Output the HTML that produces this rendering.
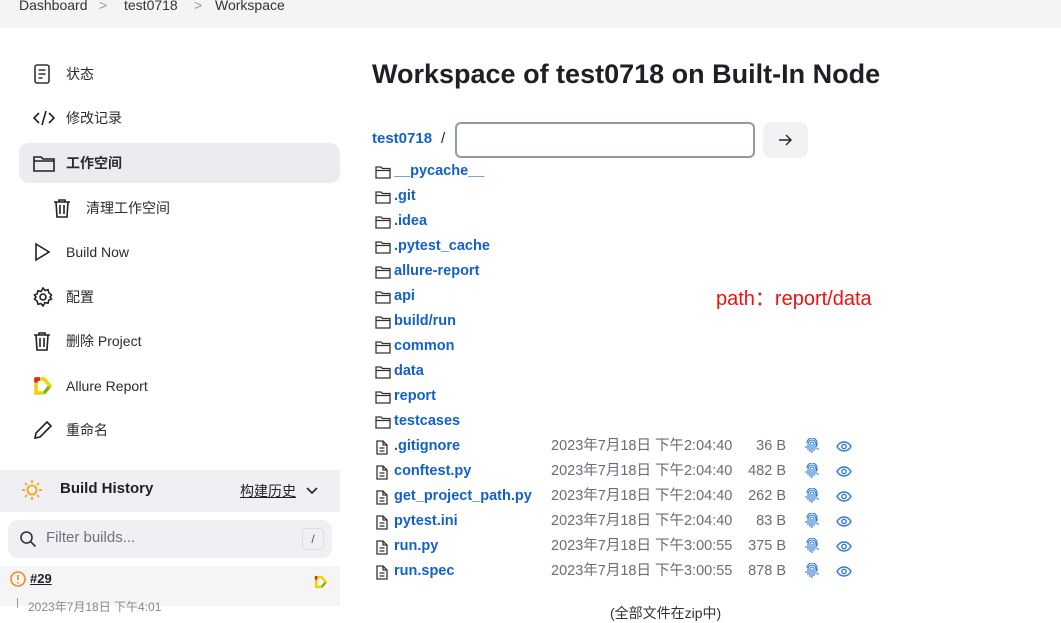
<!DOCTYPE html>
<html><head><meta charset="utf-8"><style>
*{margin:0;padding:0;box-sizing:border-box}
body{width:1061px;height:606px;overflow:hidden;background:#fff;font-family:"Liberation Sans","Noto Sans CJK SC",sans-serif;color:#1f1f26;position:relative}
.abs{position:absolute}
.bc{left:0;top:0;width:1061px;height:28px;background:#f4f4f6;font-size:14px;color:#333}
.bc span{position:absolute;top:-3px}
.side{font-size:14px;color:#2b2b33}
.item{position:absolute;left:19px;width:321px;height:40px;line-height:40px;padding-left:47px}
.item svg{position:absolute;left:14px;top:10px}
.sel{background:#ebebf0;border-radius:10px;font-weight:bold}
a{color:#1361c8;font-weight:bold;text-decoration:none}
.row{position:absolute;left:375px;height:25px;line-height:25px;font-size:14.5px;width:500px}
.row .ic{position:absolute;left:0;top:6px}
.row a{position:absolute;left:19px}
.dt{position:absolute;left:176px;color:#6b6b7a}
.sz{position:absolute;right:89px;color:#6b6b7a}
.row .fp{position:absolute;left:430px;top:4px}
.row .ey{position:absolute;left:461px;top:7px}
</style></head><body>
<div class="abs bc"><span style="left:19px">Dashboard</span><span style="left:99px;color:#999">&gt;</span><span style="left:124px">test0718</span><span style="left:194px;color:#999">&gt;</span><span style="left:215px">Workspace</span></div>

<div class="side">
<div class="item" style="top:54px"><svg width="18" height="20" viewBox="0 0 18 20" fill="none" stroke="#333" stroke-width="1.6"><rect x="2" y="1" width="14" height="18" rx="2"/><path d="M5.5 6h7M5.5 10h7M5.5 14h4"/></svg>状态</div>
<div class="item" style="top:98px"><svg width="22" height="20" viewBox="0 0 22 20" fill="none" stroke="#222" stroke-width="1.6"><path d="M6 5l-5 5 5 5M16 5l5 5-5 5M13 3l-4 14"/></svg>修改记录</div>
<div class="item sel" style="top:143px"><svg width="22" height="20" viewBox="0 0 22 20" fill="none" stroke="#222" stroke-width="1.6"><path d="M1 4h7l2 2h11v12H1z M1 8h20"/></svg>工作空间</div>
<div class="item" style="top:188px;padding-left:67px"><svg style="left:34px" width="18" height="20" viewBox="0 0 18 20" fill="none" stroke="#222" stroke-width="1.6"><path d="M1 4h16M6 4V2h6v2M3 4l1 15h10l1-15M7 7v9M11 7v9"/></svg>清理工作空间</div>
<div class="item" style="top:232px"><svg width="18" height="20" viewBox="0 0 18 20" fill="none" stroke="#222" stroke-width="1.6"><path d="M3 2l13 8-13 8z"/></svg>Build Now</div>
<div class="item" style="top:277px"><svg width="20" height="20" viewBox="0 0 20 20" fill="none" stroke="#222" stroke-width="1.6"><circle cx="10" cy="10" r="3"/><path d="M10 1l2 2.5 3-.8.8 3L18.5 8 17 10l1.5 2-2.7 1.3-.8 3-3-.8L10 19l-2-2.5-3 .8-.8-3L1.5 12 3 10 1.5 8l2.7-1.3.8-3 3 .8z"/></svg>配置</div>
<div class="item" style="top:321px"><svg width="18" height="20" viewBox="0 0 18 20" fill="none" stroke="#222" stroke-width="1.6"><path d="M1 4h16M6 4V2h6v2M3 4l1 15h10l1-15M7 7v9M11 7v9"/></svg>删除 Project</div>
<div class="item" style="top:366px"><svg width="20" height="20" viewBox="0 0 20 20" fill="none"><path d="M3 3h8l6 7-6 7H3z" stroke="#f5d000" stroke-width="3.5"/><path d="M3 3h4" stroke="#e0201b" stroke-width="3.5"/><path d="M3 1.5v5" stroke="#e0201b" stroke-width="3.5"/><path d="M11 17l5-6" stroke="#5fb830" stroke-width="3"/></svg>Allure Report</div>
<div class="item" style="top:410px"><svg width="20" height="20" viewBox="0 0 20 20" fill="none" stroke="#222" stroke-width="1.6"><path d="M14 2l4 4L7 17l-5 1 1-5z"/></svg>重命名</div>
</div>

<div class="abs" style="left:0;top:470px;width:340px;height:42px;background:#f0f0f4"></div>
<svg class="abs" style="left:21px;top:479px" width="22" height="22" viewBox="0 0 22 22" fill="none" stroke="#f5a623" stroke-width="1.8"><circle cx="11" cy="11" r="4.5"/><path d="M11 1v3M11 18v3M1 11h3M18 11h3M4 4l2 2M16 16l2 2M4 18l2-2M16 6l2-2"/></svg>
<div class="abs" style="left:60px;top:480px;font-size:15px;font-weight:bold">Build History</div>
<div class="abs" style="left:240px;top:481px;font-size:14px;text-decoration:underline">构建历史</div>
<svg class="abs" style="left:305px;top:486px" width="14" height="10" viewBox="0 0 14 10" fill="none" stroke="#222" stroke-width="1.6"><path d="M2 2l5 5 5-5"/></svg>
<div class="abs" style="left:8px;top:520px;width:324px;height:38px;background:#f0f0f4;border-radius:10px"></div>
<svg class="abs" style="left:19px;top:530px" width="18" height="18" viewBox="0 0 18 18" fill="none" stroke="#333" stroke-width="1.6"><circle cx="7.5" cy="7.5" r="5.5"/><path d="M11.5 11.5l5 5"/></svg>
<div class="abs" style="left:46px;top:529px;font-size:15px;color:#6e6e7e">Filter builds...</div>
<div class="abs" style="left:302px;top:528px;width:22px;height:22px;border:1px solid #ddd;border-radius:4px;font-size:12px;text-align:center;line-height:20px;color:#555">/</div>
<div class="abs" style="left:0;top:566px;width:340px;height:40px;background:#f5f5f7"></div>
<svg class="abs" style="left:10px;top:571px" width="16" height="16" viewBox="0 0 16 16" fill="none" stroke="#f08c1a" stroke-width="1.6"><circle cx="8" cy="8" r="7"/><path d="M8 4v5M8 11v1.5"/></svg>
<div class="abs" style="left:30px;top:571px;font-size:13px;font-weight:bold;text-decoration:underline">#29</div>
<svg class="abs" style="left:314px;top:575px" width="14" height="14" viewBox="0 0 20 20" fill="none"><path d="M3 3h8l6 7-6 7H3z" stroke="#f5d000" stroke-width="3.5"/><path d="M3 1.5v5" stroke="#e0201b" stroke-width="3.5"/><path d="M11 17l5-6" stroke="#5fb830" stroke-width="3"/></svg>
<div class="abs" style="left:17px;top:598px;width:1px;height:10px;background:#999"></div>
<div class="abs" style="left:28px;top:598px;font-size:12px;color:#888">2023年7月18日 下午4:01</div>

<div class="abs" style="left:372px;top:59px;font-size:27px;font-weight:bold;color:#1f1f26">Workspace of test0718 on Built-In Node</div>
<div class="abs" style="left:372px;top:130px;font-size:15px"><a>test0718</a></div>
<div class="abs" style="left:441px;top:130px;font-size:15px">/</div>
<div class="abs" style="left:455px;top:122px;width:300px;height:36px;border:2px solid #8e9ba6;border-radius:6px"></div>
<div class="abs" style="left:763px;top:122px;width:45px;height:36px;background:#f2f2f4;border-radius:8px"></div>
<svg class="abs" style="left:778px;top:133px" width="14" height="14" viewBox="0 0 14 14" fill="none" stroke="#222" stroke-width="1.4"><path d="M1 7h12M8 2l5 5-5 5"/></svg>

<div class="abs" style="left:716px;top:282px;font-size:20px;color:#f01010">path：report/data</div>

<div id="rows"></div>
<div class="abs" style="left:610px;top:603px;font-size:14px;color:#333">(全部文件在zip中)</div>
<script>
var F='<svg class="ic" width="16" height="14" viewBox="0 0 16 14" fill="none" stroke="#333" stroke-width="1.3"><path d="M1 2h5l1.5 1.5H15V13H1zM1 5.5h14"/></svg>';
var D='<svg class="ic" width="14" height="15" viewBox="0 0 14 15" fill="none" stroke="#333" stroke-width="1.3"><path d="M2 1h6l4 4v9H2zM8 1v4h4M4.5 8h5M4.5 11h5"/></svg>';
var FP='<svg class="fp" width="14" height="16" viewBox="0 0 14 16" fill="none" stroke="#2f7ad9" stroke-width="1.1"><path d="M2 5a5 5 0 0 1 10 0v3M3 12V6a4 4 0 0 1 8 0v5M5 14V6a2 2 0 0 1 4 0v7M7 6v9M1 8v2M13 10v2"/></svg>';
var EY='<svg class="ey" width="16" height="11" viewBox="0 0 16 11" fill="none" stroke="#2f7ad9" stroke-width="1.4"><path d="M1 5.5C3 2 5.5 1 8 1s5 1 7 4.5C13 9 10.5 10 8 10S3 9 1 5.5z"/><circle cx="8" cy="5.5" r="2.2"/></svg>';
var dirs=["__pycache__",".git",".idea",".pytest_cache","allure-report","api","build/run","common","data","report","testcases"];
var files=[[".gitignore","下午2:04:40","36 B"],["conftest.py","下午2:04:40","482 B"],["get_project_path.py","下午2:04:40","262 B"],["pytest.ini","下午2:04:40","83 B"],["run.py","下午3:00:55","375 B"],["run.spec","下午3:00:55","878 B"]];
var h="",y=159;
dirs.forEach(function(d){h+='<div class="row" style="top:'+y+'px">'+F+'<a>'+d+'</a></div>';y+=25;});
files.forEach(function(f){h+='<div class="row" style="top:'+y+'px">'+D+'<a>'+f[0]+'</a><span class="dt">2023年7月18日 '+f[1]+'</span><span class="sz">'+f[2]+'</span>'+FP+EY+'</div>';y+=25;});
document.getElementById("rows").innerHTML=h;
</script>
</body></html>
